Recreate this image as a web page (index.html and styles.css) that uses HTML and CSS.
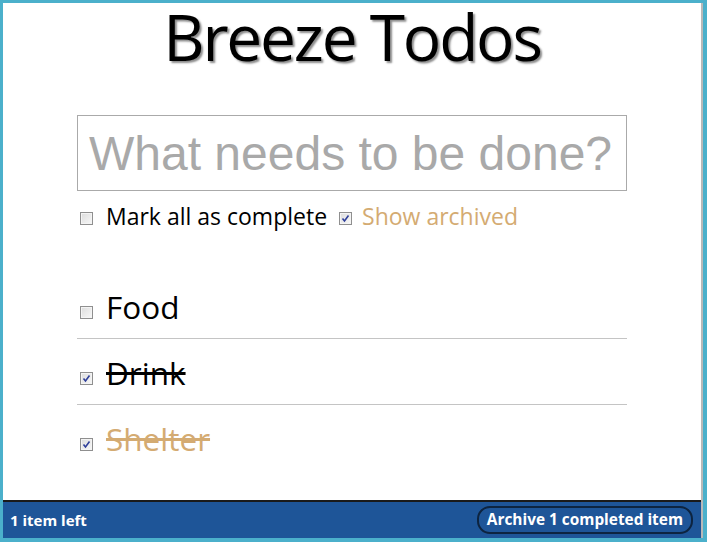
FILE: index.html
```html
<!DOCTYPE html>
<html>
<head>
<meta charset="utf-8">
<title>Breeze Todos</title>
<link rel="stylesheet" href="styles.css">
</head>
<body>
<div class="app">
  <h1 class="title">Breeze Todos</h1>
  <main class="main">
    <div class="new-todo">What needs to be done?</div>
    <div class="options">
      <span class="cb"></span>
      <span class="opt-label">Mark all as complete</span>
      <span class="cb checked"><svg viewBox="0 0 13 13" width="13" height="13"><path d="M3.5 6.5 L5.5 9 L9.5 3.5" fill="none" stroke="#2f3f9a" stroke-width="1.6"/></svg></span>
      <span class="opt-label archived">Show archived</span>
    </div>
    <ul class="todos">
      <li class="todo">
        <span class="cb"></span>
        <span class="todo-text">Food</span>
      </li>
      <li class="todo done">
        <span class="cb checked"><svg viewBox="0 0 13 13" width="13" height="13"><path d="M3.5 6.5 L5.5 9 L9.5 3.5" fill="none" stroke="#2f3f9a" stroke-width="1.6"/></svg></span>
        <span class="todo-text">Drink</span>
      </li>
      <li class="todo done archived-item">
        <span class="cb checked"><svg viewBox="0 0 13 13" width="13" height="13"><path d="M3.5 6.5 L5.5 9 L9.5 3.5" fill="none" stroke="#2f3f9a" stroke-width="1.6"/></svg></span>
        <span class="todo-text">Shelter</span>
      </li>
    </ul>
  </main>
  <footer class="footer">
    <span class="count">1 item left</span>
    <span class="archive-btn">Archive 1 completed item</span>
  </footer>
</div>
</body>
</html>
```
FILE: styles.css
```css
html, body {
  margin: 0;
  padding: 0;
}
body {
  background: #4bb0cb;
  padding: 3px 4px 4px 3px;
  font-family: "Open Sans", "Noto Sans", sans-serif;
}
.app {
  background: #fff;
  height: 535px;
  display: flex;
  flex-direction: column;
  border-right: 2px solid #b9b9b9;
  box-sizing: border-box;
}
.title {
  margin: 1px 0 0;
  font-size: 64px;
  line-height: 66px;
  font-weight: 400;
  text-align: center;
  color: #000;
  text-shadow: 2px 2px 2px rgba(0,0,0,0.45);
  letter-spacing: -2.2px;
}
.main {
  width: 550px;
  margin: 45px auto 0;
}
.new-todo {
  box-sizing: border-box;
  height: 76px;
  border: 1px solid #aaa;
  padding: 0 11px;
  font-family: "Liberation Sans", Arial, sans-serif;
  font-size: 48px;
  line-height: 76px;
  color: #a9a9a9;
}
.options {
  display: flex;
  align-items: baseline;
  margin-top: 10px;
  padding-left: 3px;
  font-size: 23px;
  line-height: 30px;
}
.cb {
  display: inline-block;
  width: 13px;
  height: 13px;
  box-sizing: border-box;
  border: 1px solid #8f8f8f;
  background: linear-gradient(135deg, #dcdcdc, #f8f8f8);
  box-shadow: inset 0 0 0 1px #f4f4f4;
  flex: none;
}
.cb svg {
  display: block;
  margin: -1px;
}
.opt-label {
  margin-left: 13px;
  margin-right: 12px;
  color: #000;
}
.opt-label.archived {
  margin-left: 10px;
  color: #d4ab72;
}
.todos {
  list-style: none;
  margin: 42px 0 0;
  padding: 0;
}
.todo {
  display: flex;
  align-items: baseline;
  height: 65px;
  padding-left: 3px;
  border-bottom: 1px solid #c4c4c4;
  font-size: 31.5px;
  line-height: 67px;
}
.todo .cb {
  margin-bottom: -2px;
}
.todo:last-child {
  border-bottom: none;
}
.todo-text {
  margin-left: 13px;
  color: #000;
}
.todo.done .todo-text {
  text-decoration: line-through;
}
.todo.archived-item .todo-text {
  color: #d4ab72;
}
.footer {
  margin-top: auto;
  height: 38px;
  box-sizing: border-box;
  border-top: 2px solid #1a1a1a;
  background: #1e5598;
  display: flex;
  align-items: center;
  justify-content: space-between;
  padding: 0 8px 0 7px;
  color: #fff;
  font-weight: 700;
  font-size: 15px;
}
.archive-btn {
  border: 2px solid #0d2440;
  border-radius: 13px;
  padding: 1px 8px 2px;
  background: #1e5598;
  font-size: 15.4px;
}
```
